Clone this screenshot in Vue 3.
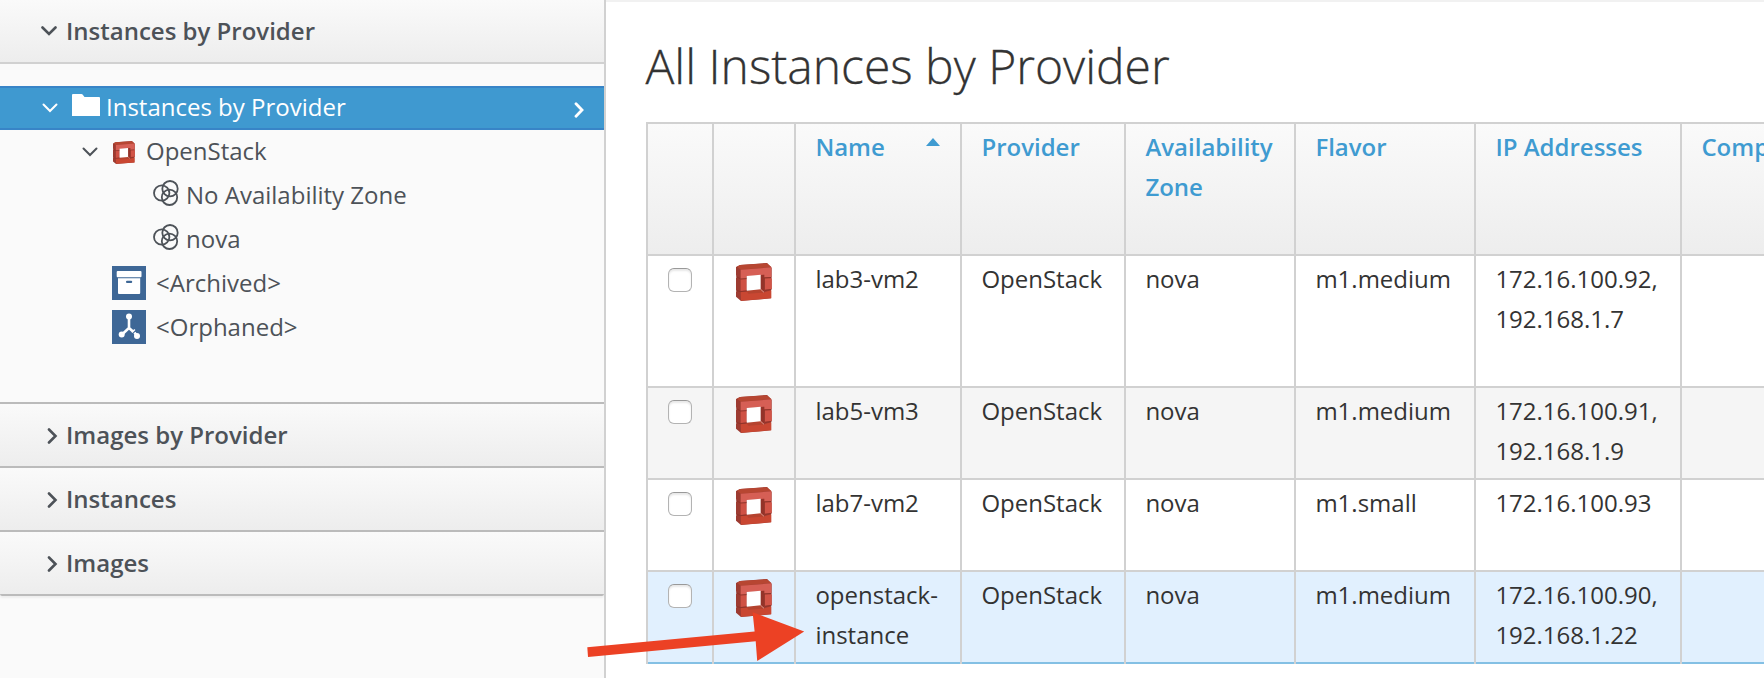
<script setup>
import { h } from 'vue'

const OpenStackIcon = () =>
  h('svg', { viewBox: '288 459 108 114', preserveAspectRatio: 'none', 'aria-hidden': 'true' }, [
    h('path', { d: 'M288 471L300 465L381 459L395 473V502L393 504L395 507V536L393 539V565L303 573L288 560V545L290 542L288 539V504L290 500L288 496Z', fill: '#9d3b31' }),
    h('path', { d: 'M291 470L300 465L381 460L394 471L302 479Z', fill: '#b74632' }),
    h('path', { d: 'M302 479L394 472V501L372 502V495L319 499V505L302 506Z', fill: '#d65f55' }),
    h('path', { d: 'M302 508L320 507V541L302 543Z', fill: '#cf5144' }),
    h('path', { d: 'M375 505L395 504V537L375 539Z', fill: '#d25447' }),
    h('path', { d: 'M302 546L321 544L372 547L394 541V565L303 572Z', fill: '#c94732' }),
    h('path', { d: 'M321 545L332 539L362 536L374 547L325 551Z', fill: '#b5432f' }),
    h('path', { d: 'M361 495L373 494V546L361 535Z', fill: '#943329' }),
    h('path', { d: 'M320 498L362 494V538L320 542Z', fill: '#fff' }),
    h('path', { d: 'M288 499L302 507L320 506M288 541L302 545L321 543M373 504L395 503M375 541L395 538', fill: 'none', stroke: '#842d24', 'stroke-width': 1.8 }),
    h('path', { d: 'M361 537L372 547', fill: 'none', stroke: '#eec0b9', 'stroke-width': 2 }),
  ])

const panels = ['Images by Provider', 'Instances', 'Images']
const zones = ['No Availability Zone', 'nova']
const columns = ['Provider', 'Availability Zone', 'Flavor', 'IP Addresses', 'Comp']
const rows = [
  { name: 'lab3-vm2', flavor: 'm1.medium', ips: ['172.16.100.92,', '192.168.1.7'], kind: 'tall' },
  { name: 'lab5-vm3', flavor: 'm1.medium', ips: ['172.16.100.91,', '192.168.1.9'], kind: 'striped' },
  { name: 'lab7-vm2', flavor: 'm1.small', ips: ['172.16.100.93'], kind: '' },
  { name: 'openstack-instance', flavor: 'm1.medium', ips: ['172.16.100.90,', '192.168.1.22'], kind: 'selected' },
]
</script>

<template>
  <div class="page">
    <aside class="sidebar">
      <div class="panel-head open">
        <span class="toggle"><svg class="down" width="16" height="10" viewBox="0 0 16 10"><path d="M1.5 1.5L8 8L14.5 1.5" /></svg></span>
        <span>Instances by Provider</span>
      </div>
      <div class="tree">
        <div class="node active">
          <svg class="thin root-chevron" width="16" height="10" viewBox="0 0 16 10"><path d="M1.5 1.5L8 8L14.5 1.5" /></svg>
          <svg class="folder" width="28" height="22" viewBox="0 0 28 22"><path d="M0 22V1Q0 0 1 0H9.5Q10.3 0 10.8 .8L12.5 3H27Q28 3 28 4V22Z" fill="#fff" /></svg>
          <span class="label">Instances by Provider</span>
          <svg class="go" width="10" height="16" viewBox="0 0 10 16"><path d="M2 1.8L8 8L2 14.2" /></svg>
        </div>
        <div class="node provider">
          <svg class="thin" width="16" height="10" viewBox="0 0 16 10"><path d="M1.5 1.5L8 8L14.5 1.5" /></svg>
          <OpenStackIcon class="os-small" />
          <span class="label">OpenStack</span>
        </div>
        <div v-for="zone in zones" :key="zone" class="node zone">
          <svg class="rings" width="26" height="26" viewBox="0 0 26 26">
            <circle cx="8.7" cy="13" r="7.7" /><circle cx="17" cy="8.7" r="7.7" /><circle cx="16.5" cy="17.3" r="7.7" />
          </svg>
          <span class="label">{{ zone }}</span>
        </div>
        <div class="node group">
          <svg width="34" height="34" viewBox="0 0 34 34">
            <rect width="34" height="34" fill="#3e6796" />
            <rect x="4.7" y="5" width="24.8" height="6.3" rx="1" fill="#fff" />
            <path d="M6 12.3H28.2V27Q28.2 28 27.2 28H7Q6 28 6 27Z" fill="#fff" />
            <rect x="14" y="14.8" width="6.2" height="2.2" rx="1" fill="#3e6796" />
          </svg>
          <span class="label">&lt;Archived&gt;</span>
        </div>
        <div class="node group">
          <svg width="34" height="34" viewBox="0 0 34 34">
            <rect width="34" height="34" fill="#3e6796" />
            <path d="M17 7V18L10 24.5M17 18L21 21.5M22.5 22.5L25 26" fill="none" stroke="#fff" stroke-width="2.6" />
            <circle cx="17" cy="6.6" r="3" fill="#fff" /><circle cx="9.7" cy="24.5" r="3" fill="#fff" /><circle cx="25" cy="26" r="3" fill="#fff" />
            <path d="M20 22.5L22.8 19.5" stroke="#fff" stroke-width="1.5" />
          </svg>
          <span class="label">&lt;Orphaned&gt;</span>
        </div>
      </div>
      <div v-for="panel in panels" :key="panel" class="panel-head">
        <span class="toggle right"><svg width="11" height="16" viewBox="0 0 11 16"><path d="M2 1.5L8.5 8L2 14.5" /></svg></span>
        <span>{{ panel }}</span>
      </div>
    </aside>

    <main class="content">
      <h1>All Instances by Provider</h1>
      <table>
        <colgroup>
          <col class="c-check" /><col class="c-icon" /><col class="c-name" /><col class="c-provider" />
          <col class="c-zone" /><col class="c-flavor" /><col class="c-ip" /><col class="c-last" />
        </colgroup>
        <thead>
          <tr>
            <th></th>
            <th></th>
            <th>
              <div class="sorted">Name
                <svg width="14" height="8" viewBox="0 0 14 8"><path d="M0 8L7 0L14 8Z" fill="#3f9bd1" /></svg>
              </div>
            </th>
            <th v-for="column in columns" :key="column">{{ column }}</th>
          </tr>
        </thead>
        <tbody>
          <tr v-for="row in rows" :key="row.name" :class="row.kind">
            <td class="check"><input type="checkbox" :aria-label="row.name" /></td>
            <td class="icon"><OpenStackIcon class="os-large" /></td>
            <td>{{ row.name }}</td>
            <td>OpenStack</td>
            <td>nova</td>
            <td>{{ row.flavor }}</td>
            <td><div v-for="ip in row.ips" :key="ip">{{ ip }}</div></td>
            <td></td>
          </tr>
        </tbody>
      </table>
    </main>

    <svg class="arrow" width="218" height="50" viewBox="587 612 218 50">
      <path d="M587.3 647.3L754.6 631.4L752.6 612.2L804.2 631.6L757.2 661L755.7 641.2L588 657Z" fill="#ec4124" />
    </svg>
  </div>
</template>

<style>
body { margin: 0; overflow: hidden; }
</style>

<style scoped>
.page {
  position: relative;
  display: flex;
  width: 1764px;
  height: 678px;
  overflow: hidden;
  background: #fff;
  color: #333;
  font: 24px/40px "Open Sans", "Noto Sans", sans-serif;
}
svg { display: block; flex: none; }
.sidebar {
  box-sizing: border-box;
  flex: none;
  width: 606px;
  border-right: 2px solid #d1d1d1;
  background: #fafafa;
  color: #4d5258;
}
.panel-head {
  box-sizing: border-box;
  display: flex;
  height: 64px;
  padding: 11px 0 0 41px;
  border-bottom: 2px solid #bbb;
  background: linear-gradient(#fafafa, #ededed);
  font-weight: 600;
}
.panel-head.open { border-bottom-color: #d1d1d1; }
.panel-head:last-child { border-radius: 0 0 2px 2px; box-shadow: 0 2px 2px rgba(0, 0, 0, .05); }
.toggle { width: 25px; padding-top: 15px; }
.toggle.right { box-sizing: border-box; padding: 13px 0 0 6px; }
.toggle path { fill: none; stroke: #4d5258; stroke-width: 2.6; stroke-linecap: round; }
.tree {
  box-sizing: border-box;
  height: 340px;
  padding-top: 22px;
  border-bottom: 2px solid #bbb;
}
.node {
  box-sizing: border-box;
  display: flex;
  align-items: center;
  height: 44px;
}
.label { margin-top: -3px; }
.thin { margin-top: -1px; }
.thin path { fill: none; stroke: currentColor; stroke-width: 2; stroke-linecap: round; }
.active {
  padding: 0 20px 0 42px;
  border: solid #3884c7;
  border-width: 2px 0;
  background: #3f99d0;
  color: #fff;
}
.folder { margin: -6px 6px 0 14px; }
.go { margin: 4px 0 0 auto; }
.go path { fill: none; stroke: #fff; stroke-width: 2.8; stroke-linecap: round; }
.provider { padding-left: 82px; }
.os-small { width: 22px; height: 23px; margin: 0 11px 0 15px; }
.zone { padding-left: 153px; }
.rings { margin: -6px 7px 0 0; fill: none; stroke: #4d5258; stroke-width: 1.8; }
.group { gap: 10px; padding: 0 0 2px 112px; }
.group .label { margin-top: -1px; }
.content {
  flex: 1;
  min-width: 0;
  box-sizing: border-box;
  padding-left: 40px;
  overflow: hidden;
  border-top: 2px solid #f1f1f1;
}
h1 {
  height: 94px;
  margin: 26px 0 0 -.5px;
  color: #333;
  font-size: 48px;
  font-weight: 300;
  line-height: 76px;
  white-space: nowrap;
  -webkit-text-stroke: .3px #333;
}
table {
  width: 1118px;
  table-layout: fixed;
  border-spacing: 0;
  border-top: 2px solid #d1d1d1;
}
.c-check { width: 68px; }
.c-icon { width: 82px; }
.c-name { width: 166px; }
.c-provider { width: 164px; }
.c-zone { width: 170px; }
.c-flavor { width: 180px; }
.c-ip { width: 206px; }
.c-last { width: 82px; }
th, td {
  box-sizing: border-box;
  height: 92px;
  padding: 3px 0 0 19.4px;
  border-right: 2px solid #d1d1d1;
  box-shadow: inset 0 -2px #d1d1d1;
  overflow: hidden;
  text-align: left;
  vertical-align: top;
}
th {
  height: 132px;
  background: linear-gradient(#fafafa, #ededed);
  color: #3f9bd1;
  font-weight: 600;
}
th:first-child, td:first-child { border-left: 2px solid #d1d1d1; }
th:last-child, td:last-child { border-right: 0; }
.sorted { display: flex; justify-content: space-between; padding-right: 20.5px; }
.sorted svg { margin-top: 11px; }
.tall td { height: 132px; }
.striped td { background: #f5f5f5; }
.selected td { background: #e1f0fe; box-shadow: inset 0 -2px #84c0e4; }
.check { padding: 12px 0 0 20px; }
.icon { padding: 7px 0 0 22px; }
input {
  display: block;
  box-sizing: border-box;
  width: 24px;
  height: 24px;
  margin: 0;
  appearance: none;
  border: 1.5px solid #b3b3b3;
  border-top-color: #999;
  border-radius: 6px;
  background: #fff;
  box-shadow: inset 0 2px 2px #e8e8e8;
}
.os-large { width: 36px; height: 38px; }
.arrow { position: absolute; left: 587px; top: 612px; }
</style>
